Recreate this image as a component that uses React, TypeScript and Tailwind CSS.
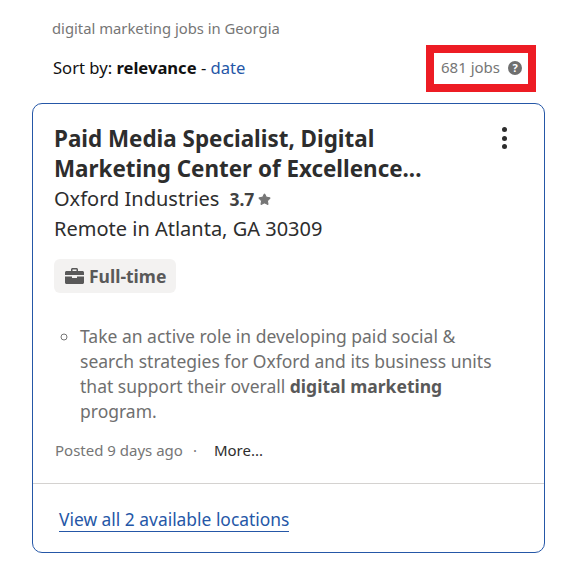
import { Star } from "lucide-react";

const font = { fontFamily: '"Noto Sans", sans-serif' };

const BriefcaseIcon = () => (
  <svg width="19" height="16" viewBox="0 0 19 16" className="shrink-0 fill-[#595959]">
    <path d="M6 3V1.5C6 .7 6.7 0 7.5 0h4c.8 0 1.5.7 1.5 1.5V3h4.5c.8 0 1.5.7 1.5 1.5V7H0V4.500C0 3.700.7 3 1.500 3H6zm1.500 0h4V1.500h-4V3z" />
    <path d="M0 8.500h7V10h5V8.500h7v6c0 .8-.7 1.500-1.500 1.500h-16C.7 16 0 15.300 0 14.500v-6z" />
  </svg>
);

export default function App() {
  return (
    <div style={font} className="h-[562px] w-[574px] overflow-hidden bg-white pl-[32px] pr-[29px]">
      <div className="pl-[20px] pt-[18px] text-[14.800px] leading-[20px] text-[#767676]">digital marketing jobs in Georgia</div>

      <div className="mt-[7px] flex items-center justify-between pl-[21px]">
        <div className="mb-[2px] text-[16.600px] leading-[20px] text-[#111]">
          Sort by: <b>relevance</b> - <a className="text-[#2557a7]">date</a>
        </div>
        <div className="mr-[9px] flex h-[47px] w-[110px] items-center gap-[8px] border-[8px] border-[#ed1c24] pb-[2px] pl-[7px] text-[15px] text-[#767676]">
          <span>681 jobs</span>
          <span className="flex h-[14px] w-[14px] items-center justify-center rounded-full bg-[#6f6f6f] text-[11px] font-bold leading-none text-white">?</span>
        </div>
      </div>

      <div className="mt-[11px] h-[450px] rounded-[10px] border border-[#2557a7]">
        <div className="relative px-[21px] pt-[20px]">
          <h2 className="text-[22.400px] font-bold leading-[30px] text-[#2d2d2d]">
            Paid Media Specialist, Digital
            <br />
            Marketing Center of Excellence...
          </h2>
          <div className="absolute right-[37px] top-[23px] flex flex-col gap-[3.700px]">
            <span className="h-[5px] w-[5px] rounded-full bg-[#2d2d2d]" />
            <span className="h-[5px] w-[5px] rounded-full bg-[#2d2d2d]" />
            <span className="h-[5px] w-[5px] rounded-full bg-[#2d2d2d]" />
          </div>
          <div className="flex items-center text-[20px] leading-[30px] text-[#2d2d2d]">
            <span>Oxford Industries</span>
            <b className="ml-[10px] text-[17.500px] text-[#424242]">3.7</b>
            <Star size={13} className="ml-[4px] fill-[#767676] text-[#767676]" />
          </div>
          <div className="text-[20px] leading-[30px] text-[#2d2d2d]">Remote in Atlanta, GA 30309</div>

          <div className="mt-[15px] inline-flex h-[34px] items-center gap-[5px] rounded-[6px] bg-[#f3f2f1] pl-[11px] pr-[10px] text-[17.500px] font-bold text-[#595959]">
            <BriefcaseIcon />
            Full-time
          </div>

          <ul className="mt-[31px] list-[circle] pl-[26px] text-[17.500px] leading-[25px] text-[#6f6f6f] marker:text-[#767676]">
            <li>
              Take an active role in developing paid social &amp;
              <br />
              search strategies for Oxford and its business units
              <br />
              that support their overall <b className="text-[#595959]">digital marketing</b>
              <br />
              program.
            </li>
          </ul>

          <div className="mt-[16px] flex pl-[1px] text-[15px] leading-[20px] text-[#767676]">
            <span>Posted 9 days ago</span>
            <span className="ml-[10px]">·</span>
            <span className="ml-[17px] text-[#2d2d2d]">More...</span>
          </div>
        </div>

        <div className="mt-[23px] border-t border-[#d4d2d0] pl-[26px] pt-[24px]">
          <a className="border-b border-[#2557a7] text-[17.400px] leading-[22px] text-[#2557a7]">View all 2 available locations</a>
        </div>
      </div>
    </div>
  );
}
